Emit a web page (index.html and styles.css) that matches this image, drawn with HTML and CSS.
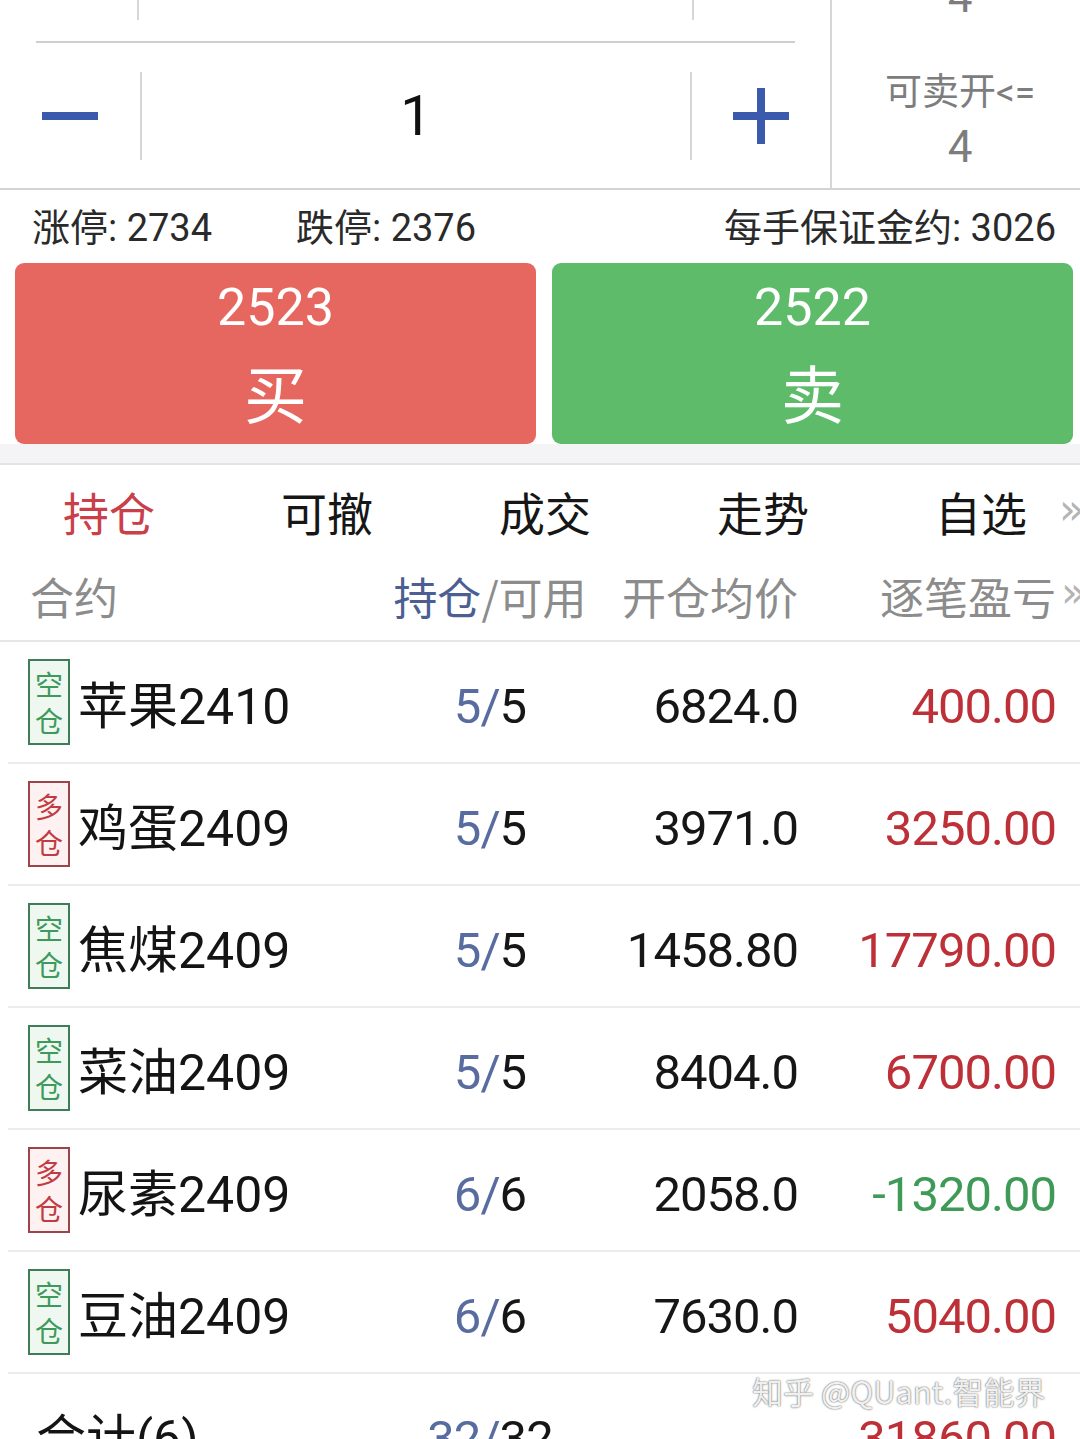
FILE: index.html
```html
<!DOCTYPE html>
<html lang="zh-CN">
<head>
  <meta charset="UTF-8">
  <title>持仓</title>
  <link rel="stylesheet" href="styles.css">
</head>
<body>
  <div class="page">
    <section class="order">
      <div class="order-left">
        <div class="step-prev">
          <span class="prev-cell prev-side"></span>
          <span class="prev-cell prev-mid"></span>
        </div>
        <div class="stepper">
          <div class="step-btn">
            <svg width="56" height="8" viewBox="0 0 56 8"><rect x="0" y="0" width="56" height="8" fill="#3b5aae"/></svg>
          </div>
          <div class="qty">1</div>
          <div class="step-btn step-plus">
            <svg width="56" height="56" viewBox="0 0 56 56"><rect x="0" y="24" width="56" height="8" fill="#3b5aae"/><rect x="24" y="0" width="8" height="56" fill="#3b5aae"/></svg>
          </div>
        </div>
      </div>
      <div class="order-right">
        <div class="avail-prev">4</div>
        <div class="avail-label">可卖开&lt;=</div>
        <div class="avail-value">4</div>
      </div>
    </section>

    <div class="limits">
      <span class="limit limit-up">涨停: 2734</span>
      <span class="limit">跌停: 2376</span>
      <span class="limit limit-margin">每手保证金约: 3026</span>
    </div>

    <div class="trade">
      <div class="trade-btn buy">
        <span class="trade-price">2523</span>
        <span class="trade-label">买</span>
      </div>
      <div class="trade-btn sell">
        <span class="trade-price">2522</span>
        <span class="trade-label">卖</span>
      </div>
    </div>
    <div class="band"></div>

    <nav class="tabs">
      <span class="tab active">持仓</span>
      <span class="tab">可撤</span>
      <span class="tab">成交</span>
      <span class="tab">走势</span>
      <span class="tab">自选</span>
      <span class="more tabs-more">»</span>
    </nav>

    <div class="pos-head">
      <span class="h-name">合约</span>
      <span class="h-pos"><em>持仓</em>/可用</span>
      <span class="h-price">开仓均价</span>
      <span class="h-pnl">逐笔盈亏</span>
      <span class="more head-more">»</span>
    </div>

    <div class="pos-row">
      <div class="name"><span class="badge short"><i>空</i><i>仓</i></span>苹果2410</div>
      <div class="pos"><em>5/</em>5</div>
      <div class="price">6824.0</div>
      <div class="pnl up">400.00</div>
    </div>
    <div class="pos-row">
      <div class="name"><span class="badge long"><i>多</i><i>仓</i></span>鸡蛋2409</div>
      <div class="pos"><em>5/</em>5</div>
      <div class="price">3971.0</div>
      <div class="pnl up">3250.00</div>
    </div>
    <div class="pos-row">
      <div class="name"><span class="badge short"><i>空</i><i>仓</i></span>焦煤2409</div>
      <div class="pos"><em>5/</em>5</div>
      <div class="price">1458.80</div>
      <div class="pnl up">17790.00</div>
    </div>
    <div class="pos-row">
      <div class="name"><span class="badge short"><i>空</i><i>仓</i></span>菜油2409</div>
      <div class="pos"><em>5/</em>5</div>
      <div class="price">8404.0</div>
      <div class="pnl up">6700.00</div>
    </div>
    <div class="pos-row">
      <div class="name"><span class="badge long"><i>多</i><i>仓</i></span>尿素2409</div>
      <div class="pos"><em>6/</em>6</div>
      <div class="price">2058.0</div>
      <div class="pnl down">-1320.00</div>
    </div>
    <div class="pos-row">
      <div class="name"><span class="badge short"><i>空</i><i>仓</i></span>豆油2409</div>
      <div class="pos"><em>6/</em>6</div>
      <div class="price">7630.0</div>
      <div class="pnl up">5040.00</div>
    </div>
    <div class="pos-row total">
      <div class="name">合计(6)</div>
      <div class="pos"><em>32/</em>32</div>
      <div class="price"></div>
      <div class="pnl up">31860.00</div>
    </div>

    <div class="watermark">知乎 @QUant.智能界</div>
  </div>
</body>
</html>
```

FILE: styles.css
```css
* {
  box-sizing: border-box;
}
body {
  margin: 0;
  background: #fff;
  font-family: Roboto, "Noto Sans CJK SC", sans-serif;
  color: #151515;
}
.page {
  position: relative;
  width: 1080px;
  height: 1439px;
  overflow: hidden;
  background: #fff;
}

/* order quantity */
.order {
  display: flex;
  height: 190px;
  border-bottom: 2px solid #d3d3d3;
}
.order-left {
  width: 830px;
  display: flex;
  flex-direction: column;
}
.step-prev {
  display: flex;
  height: 43px;
  margin: 0 35px 0 36px;
  border-bottom: 2px solid #cfcfcf;
}
.prev-cell {
  height: 20px;
  border-right: 2px solid #d6d6d6;
}
.prev-side {
  width: 103px;
}
.prev-mid {
  width: 555px;
}
.stepper {
  flex: 1;
  display: flex;
  align-items: center;
}
.step-btn {
  width: 140px;
  display: flex;
  justify-content: center;
}
.step-plus {
  width: 138px;
}
.qty {
  flex: 1;
  height: 88px;
  border-left: 2px solid #d6d6d6;
  border-right: 2px solid #d6d6d6;
  display: flex;
  align-items: center;
  justify-content: center;
  font-size: 56px;
  color: #111;
}
.order-right {
  flex: 1;
  border-left: 2px solid #d6d6d6;
  display: flex;
  flex-direction: column;
  align-items: center;
  justify-content: flex-end;
  padding: 0 0 15px 8px;
  color: #7d7d7d;
  overflow: hidden;
}
.avail-prev {
  font-size: 44px;
  line-height: 48px;
  margin-bottom: 50px;
}
.avail-label {
  font-size: 37px;
  line-height: 44px;
}
.avail-value {
  font-size: 44px;
  line-height: 52px;
  margin-top: 6px;
}

/* limit prices */
.limits {
  display: flex;
  align-items: center;
  height: 73px;
  padding: 0 24px 4px 32px;
  font-size: 38px;
  color: #2a2a2a;
}
.limit-up {
  width: 264px;
}
.limit-margin {
  margin-left: auto;
}

/* buy / sell */
.trade {
  display: flex;
  gap: 16px;
  padding: 0 7px 0 15px;
}
.trade-btn {
  flex: 1;
  height: 181px;
  border-radius: 9px;
  display: flex;
  flex-direction: column;
  align-items: center;
  padding-top: 17px;
  color: #fff;
}
.buy {
  background: #e5675f;
}
.sell {
  background: #5dbb69;
}
.trade-price {
  font-size: 52px;
  line-height: 56px;
}
.trade-label {
  font-family: "Noto Sans CJK SC", sans-serif;
  font-size: 63px;
  line-height: 70px;
  margin-top: 20px;
}
.band {
  height: 21px;
  background: #f4f4f6;
  border-bottom: 2px solid #e3e3e3;
}

/* tabs */
.tabs {
  position: relative;
  display: flex;
  height: 95px;
  padding-bottom: 4px;
  align-items: center;
}
.tab {
  width: 218px;
  flex-shrink: 0;
  text-align: center;
  font-family: "Noto Sans CJK SC", sans-serif;
  font-size: 46px;
  color: #161616;
}
.tab.active {
  color: #c9404b;
}
.more {
  position: absolute;
  color: #b4b4b4;
  font-size: 42px;
  font-family: "DejaVu Sans", sans-serif;
}
.tabs-more {
  left: 1059px;
  top: 20px;
}
.head-more {
  left: 1061px;
  top: 8px;
}

/* position table */
.pos-head {
  position: relative;
  display: grid;
  grid-template-columns: 370px 180px 218px 258px;
  align-items: center;
  height: 82px;
  padding: 0 0 8px 30px;
  border-bottom: 2px solid #e6e6e6;
  font-family: "Noto Sans CJK SC", sans-serif;
  font-size: 44px;
  color: #8c8c8c;
}
.pos-head em {
  font-style: normal;
  color: #4b5f92;
}
.h-pos {
  justify-self: center;
  white-space: nowrap;
}
.h-price,
.h-pnl {
  text-align: right;
}
.pos-row {
  display: grid;
  grid-template-columns: 364px 180px 218px 258px;
  align-items: center;
  height: 122px;
  padding-left: 28px;
  margin-left: 8px;
  border-bottom: 2px solid #ececec;
}
.pos-row > div {
  white-space: nowrap;
}
.name {
  display: flex;
  align-items: center;
  margin-left: -8px;
  font-size: 50px;
  color: #141414;
}
.badge {
  display: flex;
  flex-direction: column;
  align-items: center;
  justify-content: center;
  width: 42px;
  height: 86px;
  margin-right: 8px;
  border: 2.5px solid;
  font-family: "Noto Sans CJK SC", sans-serif;
  font-size: 28px;
  line-height: 36px;
}
.badge i {
  font-style: normal;
}
.short {
  color: #3d9a5b;
  border-color: #3f7d59;
  background: #eef8f1;
}
.long {
  color: #c23b42;
  border-color: #9c4449;
  background: #fdf1f1;
}
.pos,
.price,
.pnl {
  padding-top: 8px;
  font-size: 49px;
  letter-spacing: -1px;
  color: #161616;
}
.pos {
  justify-self: center;
}
.pos em {
  font-style: normal;
  color: #586ca0;
}
.price,
.pnl {
  text-align: right;
}
.pnl.up {
  color: #bd3038;
}
.pnl.down {
  color: #3e9a56;
}
.total {
  border-bottom: none;
  align-items: start;
  padding-top: 24px;
}
.total .name {
  margin-left: 0;
}
.total .pos,
.total .pnl {
  padding-top: 12px;
}

.watermark {
  position: absolute;
  left: 752px;
  top: 1368px;
  font-family: "Noto Sans CJK SC", sans-serif;
  font-size: 31px;
  color: rgba(255, 255, 255, 0.92);
  text-shadow: 0 0 2px rgba(0, 0, 0, 0.55), 0 0 1px rgba(0, 0, 0, 0.4);
}
```
